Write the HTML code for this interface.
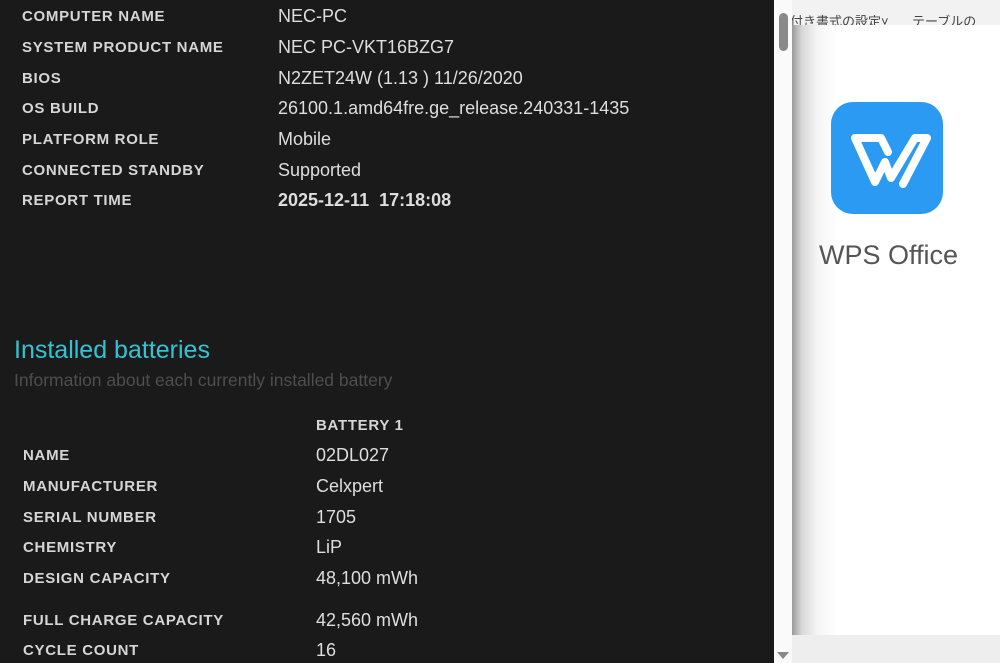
<!DOCTYPE html>
<html><head><meta charset="utf-8"><style>
body{margin:0;width:1000px;height:663px;overflow:hidden;background:#1a1a1a;font-family:"Liberation Sans","Noto Sans CJK JP",sans-serif;position:relative}
.l{position:absolute;color:#d6d6d6;font-weight:bold;font-size:15px;letter-spacing:0.7px;line-height:20px;margin-top:-9px}
.v{position:absolute;color:#dedede;font-size:18px;line-height:20px;margin-top:-10px;white-space:nowrap}
</style></head><body>
<div class="l" style="left:22px;top:16px">COMPUTER NAME</div><div class="v" style="left:278px;top:16px">NEC-PC</div>
<div class="l" style="left:22px;top:47px">SYSTEM PRODUCT NAME</div><div class="v" style="left:278px;top:47px">NEC PC-VKT16BZG7</div>
<div class="l" style="left:22px;top:78px">BIOS</div><div class="v" style="left:278px;top:78px">N2ZET24W (1.13 ) 11/26/2020</div>
<div class="l" style="left:22px;top:108px">OS BUILD</div><div class="v" style="left:278px;top:108px">26100.1.amd64fre.ge_release.240331-1435</div>
<div class="l" style="left:22px;top:139px">PLATFORM ROLE</div><div class="v" style="left:278px;top:139px">Mobile</div>
<div class="l" style="left:22px;top:170px">CONNECTED STANDBY</div><div class="v" style="left:278px;top:170px">Supported</div>
<div class="l" style="left:22px;top:200px">REPORT TIME</div><div class="v" style="left:278px;top:200px;font-weight:bold">2025-12-11&nbsp; 17:18:08</div>
<div style="position:absolute;left:14px;top:336px;color:#35c2d2;font-size:25px">Installed batteries</div>
<div style="position:absolute;left:14px;top:370px;color:#4e4e4e;font-size:17.5px">Information about each currently installed battery</div>
<div class="l" style="left:316px;top:425px">BATTERY 1</div>
<div class="l" style="left:23px;top:455px">NAME</div><div class="v" style="left:316px;top:455px">02DL027</div>
<div class="l" style="left:23px;top:486px">MANUFACTURER</div><div class="v" style="left:316px;top:486px">Celxpert</div>
<div class="l" style="left:23px;top:517px">SERIAL NUMBER</div><div class="v" style="left:316px;top:517px">1705</div>
<div class="l" style="left:23px;top:547px">CHEMISTRY</div><div class="v" style="left:316px;top:547px">LiP</div>
<div class="l" style="left:23px;top:578px">DESIGN CAPACITY</div><div class="v" style="left:316px;top:578px">48,100 mWh</div>
<div class="l" style="left:23px;top:620px">FULL CHARGE CAPACITY</div><div class="v" style="left:316px;top:620px">42,560 mWh</div>
<div class="l" style="left:23px;top:650px">CYCLE COUNT</div><div class="v" style="left:316px;top:650px">16</div>
<div style="position:absolute;left:774px;top:0;width:18px;height:663px;background:#fafafa"></div>
<div style="position:absolute;left:779px;top:13px;width:9px;height:38px;background:#8a8a8a;border-radius:5px"></div>
<div style="position:absolute;left:777px;top:652px;width:0;height:0;border-left:6px solid transparent;border-right:6px solid transparent;border-top:7px solid #888"></div>
<div style="position:absolute;left:792px;top:0;width:208px;height:663px;background:#fff"></div>
<div style="position:absolute;left:792px;top:0;width:208px;height:25px;background:#f2f2f2;overflow:hidden;font-size:13px;color:#444;white-space:nowrap"><span style="position:absolute;left:-2px;top:11px">付き書式の設定˅</span><span style="position:absolute;left:120px;top:11px">テーブルの</span></div>
<div style="position:absolute;left:792px;top:25px;width:208px;height:610px;background:linear-gradient(to right,#9a9a9a 0,#d8d8d8 10px,#f5f5f5 25px,#fff 45px)"></div>
<div style="position:absolute;left:792px;top:635px;width:208px;height:28px;background:#eeeeee"></div>
<div style="position:absolute;left:831px;top:102px;width:112px;height:112px;background:#2b9af3;border-radius:22px"></div>
<svg style="position:absolute;left:831px;top:102px" width="112" height="112" viewBox="0 0 112 112"><path d="M24 36 H50 L57 50 M24 36 L44 80 L54 60 L60 76 L84 36 H96 L72 82" fill="none" stroke="#fff" stroke-width="8" stroke-linejoin="round" stroke-linecap="round"/></svg>
<div style="position:absolute;left:819px;top:240px;font-size:27px;color:#555">WPS Office</div>
</body></html>
